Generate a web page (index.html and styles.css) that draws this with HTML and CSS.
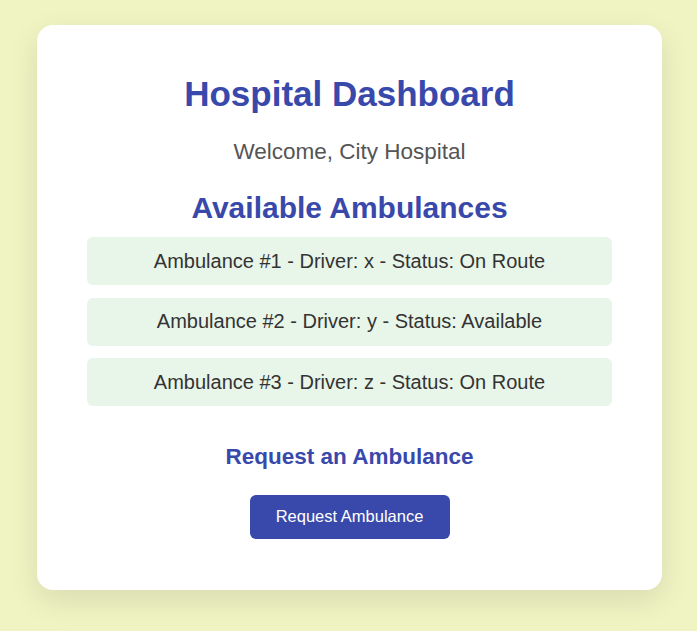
FILE: index.html
```html
<!DOCTYPE html>
<html>
<head>
<meta charset="utf-8">
<link rel="stylesheet" href="styles.css">
</head>
<body>
<div class="card">
  <h1 class="title">Hospital Dashboard</h1>
  <p class="welcome">Welcome, City Hospital</p>
  <h2 class="section">Available Ambulances</h2>
  <ul class="list">
    <li class="item">Ambulance #1 - Driver: x - Status: On Route</li>
    <li class="item">Ambulance #2 - Driver: y - Status: Available</li>
    <li class="item">Ambulance #3 - Driver: z - Status: On Route</li>
  </ul>
  <h3 class="request-title">Request an Ambulance</h3>
  <button class="btn">Request Ambulance</button>
</div>
</body>
</html>
```
FILE: styles.css
```css
html, body {
  margin: 0;
  padding: 0;
}
body {
  background: #f0f4c3;
  font-family: "Liberation Sans", Arial, sans-serif;
  min-height: 631px;
  padding: 25px 0 0 2px;
  box-sizing: border-box;
}
.card {
  width: 525px;
  margin: 0 auto;
  background: #fff;
  border-radius: 16px;
  padding: 49px 50px 51px;
  box-shadow: 0 10px 30px rgba(0, 0, 0, 0.1);
  text-align: center;
}
.title {
  color: #3949ab;
  font-size: 35px;
  margin: 0 0 24.7px;
}
.welcome {
  color: #555;
  font-size: 22.5px;
  margin: 0 0 26.2px;
}
.section {
  color: #3949ab;
  font-size: 30px;
  margin: 0 0 12.5px;
}
.list {
  list-style: none;
  margin: 0;
  padding: 0;
  display: flex;
  flex-direction: column;
  gap: 12.5px;
}
.item {
  background: #e8f5e9;
  border-radius: 6px;
  color: #333;
  font-size: 20px;
  height: 48px;
  display: flex;
  align-items: center;
  justify-content: center;
}
.request-title {
  color: #3949ab;
  font-size: 22.5px;
  margin: 37.5px 0 25px;
}
.btn {
  display: block;
  margin: 0 auto;
  background: #3949ab;
  color: #fff;
  border: none;
  border-radius: 6px;
  width: 200px;
  height: 44px;
  font-family: "Liberation Sans", Arial, sans-serif;
  font-size: 16.5px;
  cursor: pointer;
}
```
